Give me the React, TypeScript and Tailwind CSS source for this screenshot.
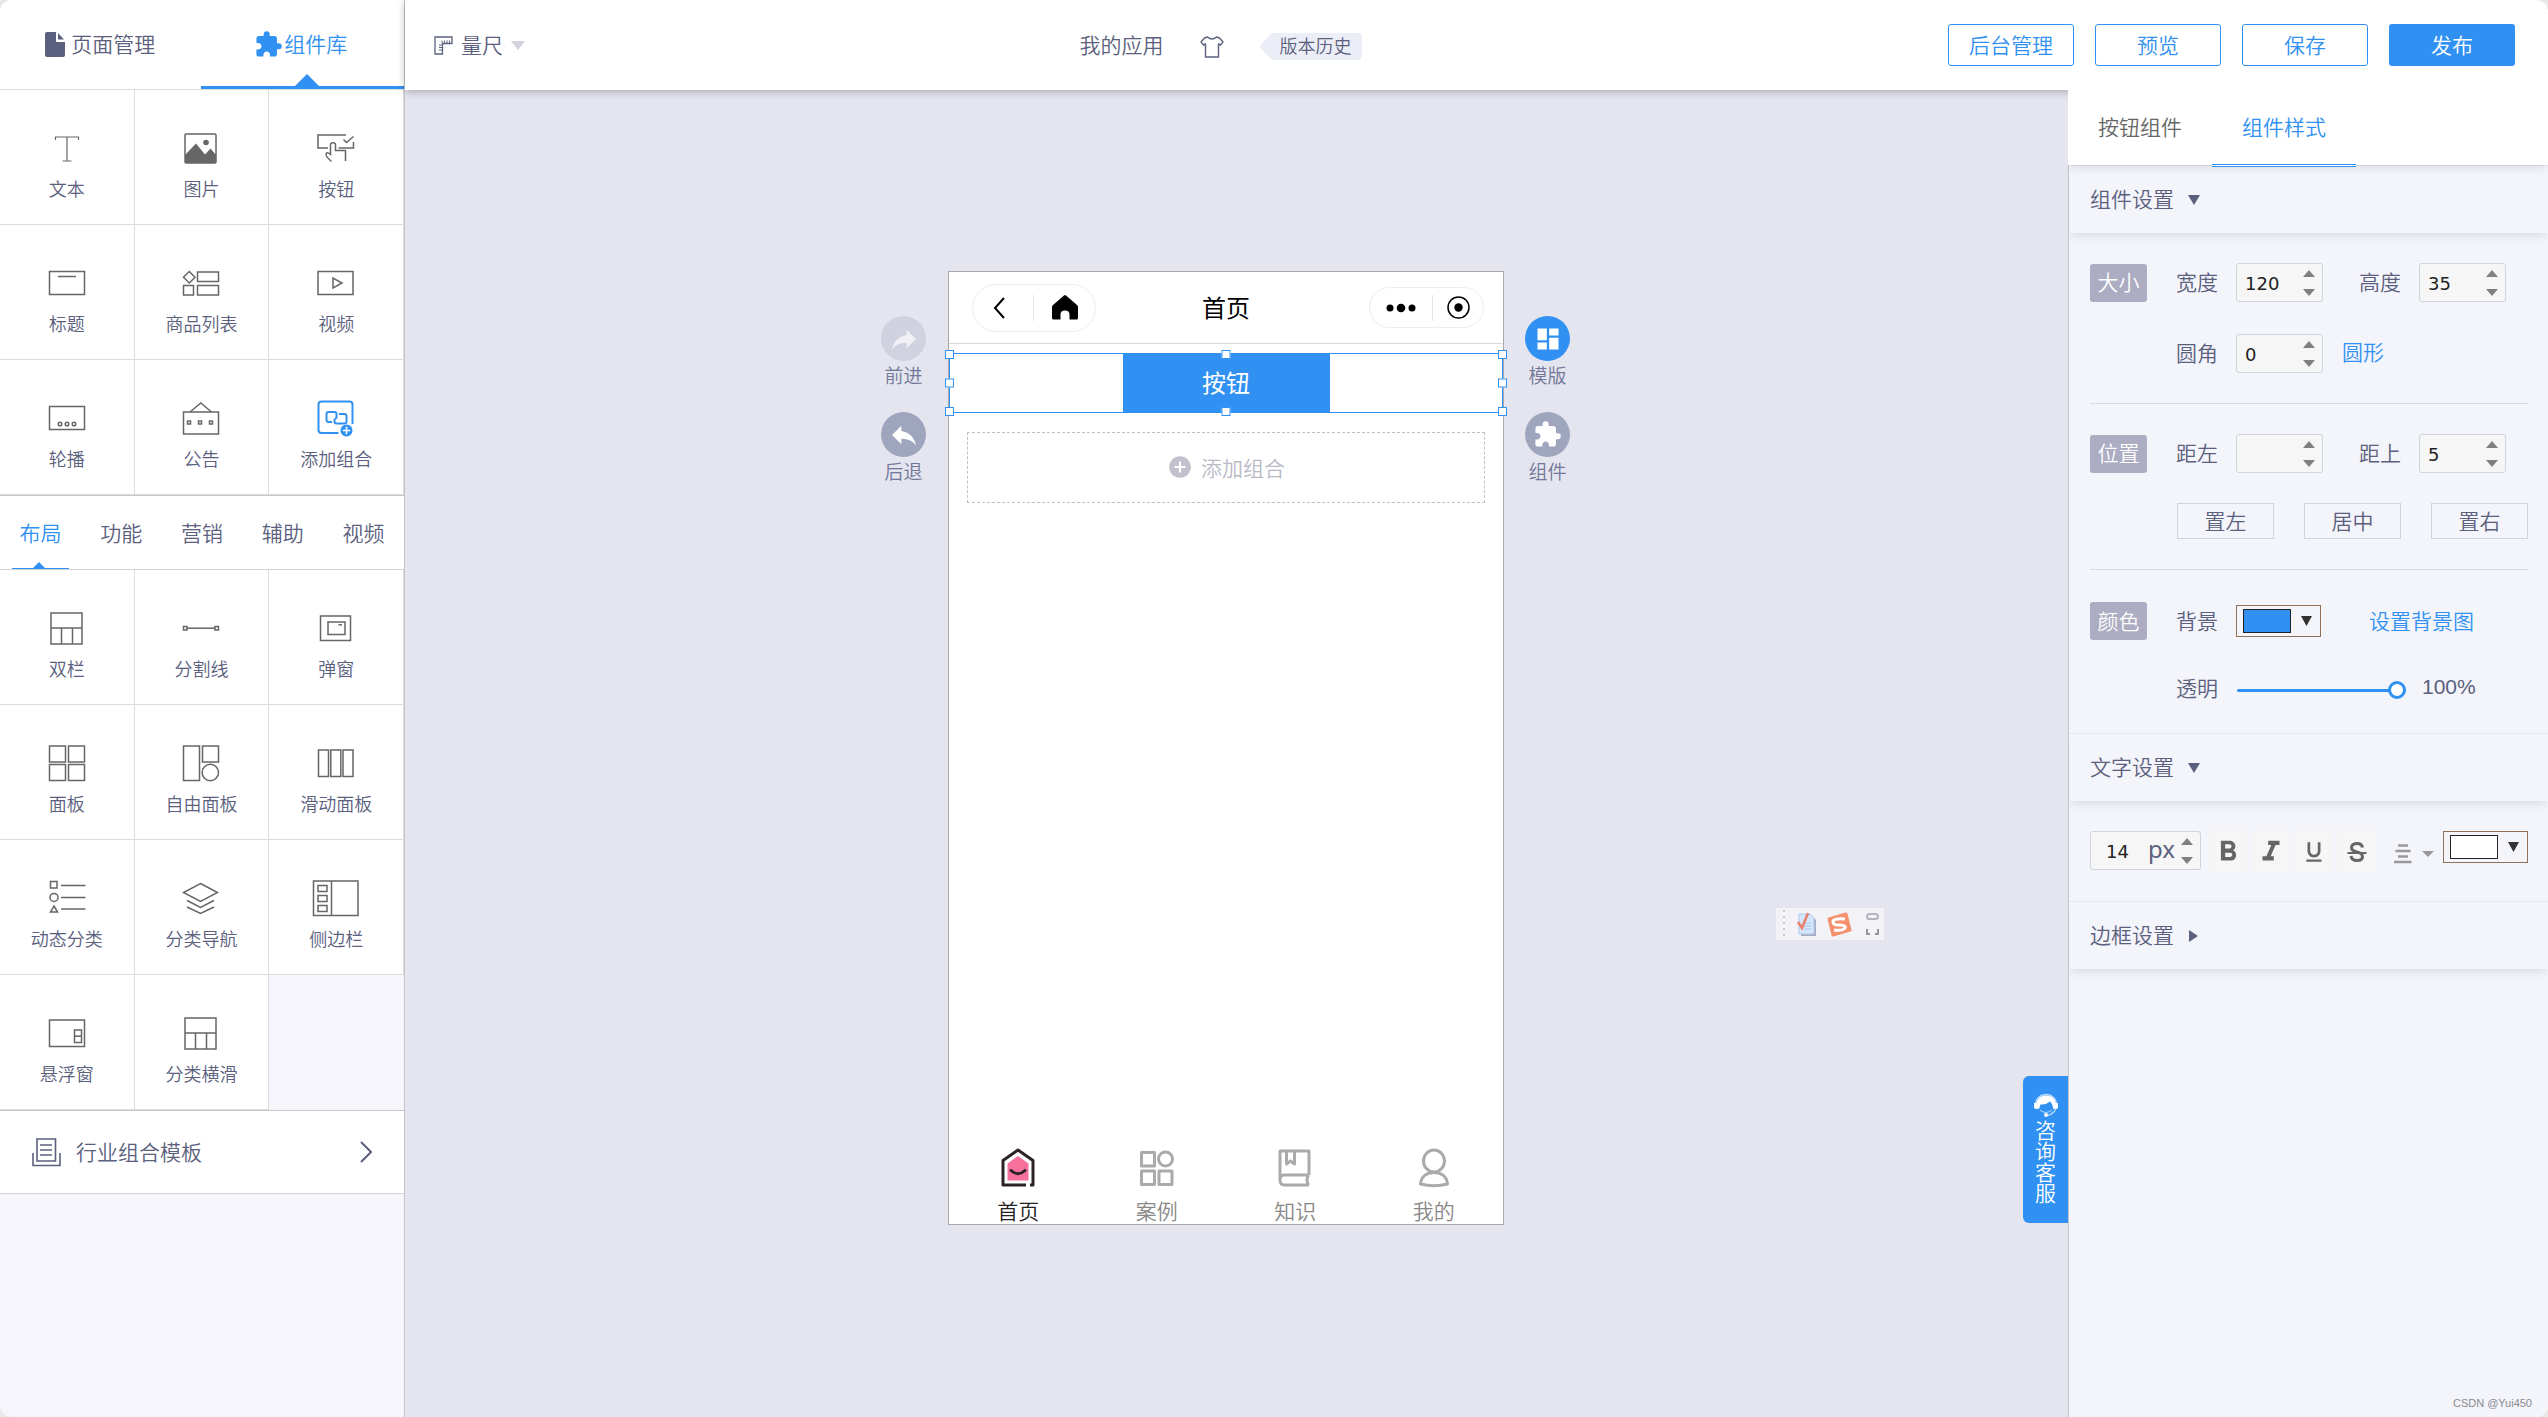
import { useState } from "react";
import type { ReactNode } from "react";
import {
  MdAddCircle,
  MdDashboard,
  MdExtension,
  MdFormatBold,
  MdFormatItalic,
  MdFormatUnderlined,
  MdReply,
} from "react-icons/md";

interface Widget {
  name: string;
  icon: ReactNode;
  accent?: boolean;
}

const columnsIcon = (
  <>
    <rect x="2" y="3" width="31" height="31" />
    <path d="M2 18H33M12.5 18V34M23.5 18V34" />
  </>
);

const basicWidgets: Widget[] = [
  {
    name: "文本",
    icon: <path d="M6.5 10V7H29.5V10M18 7V31M13.5 31H22.5" strokeWidth="1.2" />,
  },
  {
    name: "图片",
    icon: (
      <>
        <rect x="2" y="4" width="31" height="29" rx="1" />
        <path d="M2 25L13 13.5L22 24.5L27.5 18.5L33 25V33H2Z" fill="currentColor" stroke="none" />
        <circle cx="23" cy="12.5" r="2.8" fill="currentColor" stroke="none" />
      </>
    ),
  },
  {
    name: "按钮",
    icon: (
      <>
        <path d="M28 5H0V18H10M20.5 18H35.5V12M25.5 9.5L28.5 12.5L35.5 6.5" />
        <path d="M13.5 31.5C9 27.5 7.5 26 8.2 23.5C8.8 22.5 10.5 22.5 12.5 24.5V14.5C12.5 12 17.5 12 17.5 14.5V20.5H27.5V31" />
      </>
    ),
  },
  {
    name: "标题",
    icon: (
      <>
        <rect x="0.5" y="6.5" width="35" height="23" />
        <path d="M9 11.5H27" />
      </>
    ),
  },
  {
    name: "商品列表",
    icon: (
      <>
        <path d="M6.3 6.5L12 12.3L6.3 18L0.5 12.3Z" />
        <rect x="0.5" y="20.5" width="10" height="9.5" />
        <rect x="14.5" y="7" width="21" height="9.5" />
        <rect x="14.5" y="20.5" width="21" height="9.5" />
      </>
    ),
  },
  {
    name: "视频",
    icon: (
      <>
        <rect x="0" y="6.5" width="35" height="23" />
        <path d="M15 13V23L24 18Z" />
      </>
    ),
  },
  {
    name: "轮播",
    icon: (
      <>
        <rect x="0.5" y="6.5" width="35" height="23" />
        <circle cx="11" cy="24" r="1.8" />
        <circle cx="18" cy="24" r="1.8" />
        <circle cx="25" cy="24" r="1.8" />
      </>
    ),
  },
  {
    name: "公告",
    icon: (
      <>
        <rect x="0.5" y="12" width="35" height="22" />
        <path d="M7 12L17.8 3L28.5 12" />
        <rect x="4.5" y="21" width="3" height="3" />
        <rect x="15.5" y="21" width="3" height="3" />
        <rect x="26.5" y="21" width="3" height="3" />
      </>
    ),
  },
  {
    name: "添加组合",
    accent: true,
    icon: (
      <>
        <path d="M34.5 24V4.5Q34.5 1.5 31.5 1.5H3.5Q0.5 1.5 0.5 4.5V30Q0.5 33 3.5 33H20.5" strokeWidth="2" />
        <path d="M14 22H10.5Q8.5 22 8.5 20V14Q8.5 12 10.5 12H16.5Q18.5 12 18.5 14V17Q18.5 18.5 17 18.5" strokeWidth="2" />
        <path d="M21 14H26.5Q28.5 14 28.5 16V21.5Q28.5 23.5 26.5 23.5H18.5Q16.5 23.5 16.5 21.5V18.5" strokeWidth="2" />
        <circle cx="28.5" cy="30.5" r="6" fill="currentColor" stroke="none" />
        <path d="M24.8 30.5H32.2M28.5 26.8V34.2" stroke="#fff" strokeWidth="1.6" />
      </>
    ),
  },
];

const layoutWidgets: Widget[] = [
  { name: "双栏", icon: columnsIcon },
  {
    name: "分割线",
    icon: (
      <>
        <rect x="0.5" y="16.5" width="3.5" height="3.5" />
        <rect x="32" y="16.5" width="3.5" height="3.5" />
        <path d="M4 18.2H32" />
      </>
    ),
  },
  {
    name: "弹窗",
    icon: (
      <>
        <rect x="2.5" y="6" width="30" height="24.5" />
        <rect x="10" y="12" width="17" height="12.5" />
        <path d="M20.5 14.8H24" />
      </>
    ),
  },
  {
    name: "面板",
    icon: (
      <>
        <rect x="0.5" y="1" width="16" height="16" />
        <rect x="19.5" y="1" width="16" height="16" />
        <rect x="0.5" y="19.5" width="16" height="16" />
        <rect x="19.5" y="19.5" width="16" height="16" />
      </>
    ),
  },
  {
    name: "自由面板",
    icon: (
      <>
        <rect x="0.5" y="1" width="16" height="34.5" />
        <rect x="19.5" y="1" width="16" height="16" />
        <circle cx="27.3" cy="27.5" r="8.2" />
      </>
    ),
  },
  {
    name: "滑动面板",
    icon: (
      <>
        <rect x="0.5" y="5" width="10" height="26.5" />
        <rect x="12.8" y="5" width="10" height="26.5" />
        <rect x="25" y="5" width="10" height="26.5" />
      </>
    ),
  },
  {
    name: "动态分类",
    icon: (
      <>
        <rect x="1.5" y="1.5" width="6.5" height="6.5" />
        <circle cx="5" cy="17.4" r="4" />
        <path d="M5 26L8.5 32H1.5Z" />
        <path d="M12 5.5H36.5M12 17.5H36.5M12 29H36.5" />
      </>
    ),
  },
  {
    name: "分类导航",
    icon: (
      <path d="M17.5 3.5L34.5 12.5L17.5 21.5L0.5 12.5ZM4 20.5L17.5 27.3L31 20.5M4 27L17.5 33.5L31 27" />
    ),
  },
  {
    name: "侧边栏",
    icon: (
      <>
        <rect x="-4.5" y="1" width="44.5" height="34.5" />
        <path d="M13.5 1V35.5" />
        <rect x="0" y="5.5" width="9" height="6" />
        <rect x="0" y="15.5" width="9" height="6" />
        <rect x="0" y="25.5" width="9" height="6" />
      </>
    ),
  },
  {
    name: "悬浮窗",
    icon: (
      <>
        <rect x="0.5" y="5" width="35" height="26.5" />
        <rect x="25.5" y="15" width="7" height="12.5" />
        <path d="M25.5 21.2H32.5" />
      </>
    ),
  },
  { name: "分类横滑", icon: columnsIcon },
];

const categories = ["布局", "功能", "营销", "辅助", "视频"];

const WidgetGrid = ({ widgets }: { widgets: Widget[] }) => (
  <div className="grid grid-cols-3">
    {widgets.map((widget) => (
      <button
        key={widget.name}
        className="flex h-[135px] flex-col items-center gap-2 border-r border-b border-[#dcdcdc] bg-white pt-10 text-lg leading-7"
      >
        <svg
          viewBox="0 0 36 36"
          className={`h-9 w-9 overflow-visible ${widget.accent ? "text-[#3091f2]" : "text-[#666666]"}`}
          fill="none"
          stroke="currentColor"
          strokeWidth="1.5"
        >
          {widget.icon}
        </svg>
        {widget.name}
      </button>
    ))}
  </div>
);

const Sidebar = () => {
  const [category, setCategory] = useState("布局");

  return (
    <aside className="w-[405px] shrink-0 border-r border-[#c4c4cb] bg-[#f5f5fb]">
      <nav className="flex h-[90px] border-b border-[#dcdcdc] bg-white">
        <button className="flex flex-1 items-center justify-center gap-[6px]">
          <svg viewBox="0 0 20 25" className="h-[25px] w-5" fill="currentColor">
            <path d="M2 0H11V9Q11 10 12 10H20V23Q20 25 18 25H2Q0 25 0 23V2Q0 0 2 0ZM13 1L19 7.5H13Z" />
          </svg>
          <span className="pb-[3px]">页面管理</span>
        </button>
        <button className="relative flex flex-1 items-center justify-center gap-px pr-[3px] text-[#3091f2]">
          <MdExtension className="h-[29px] w-[29px]" />
          <span className="pb-[3px]">组件库</span>
          <span className="absolute inset-x-0 bottom-0 h-[3px] bg-[#3091f2]" />
          <svg viewBox="0 0 24 12" className="absolute bottom-[3px] left-[94px] h-3 w-6" fill="currentColor">
            <path d="M12 0L24 12H0Z" />
          </svg>
        </button>
      </nav>

      <WidgetGrid widgets={basicWidgets} />

      <nav className="grid h-[75px] grid-cols-5 border-t border-b border-t-[#c8c8c8] border-b-[#d4d4d4] bg-white">
        {categories.map((item) => (
          <button
            key={item}
            onClick={() => setCategory(item)}
            className={`relative pb-[2px] ${item === category ? "text-[#3091f2]" : ""}`}
          >
            {item}
            {item === category && (
              <svg viewBox="0 0 57 7" className="absolute bottom-0 left-3 h-[7px] w-[57px]" fill="currentColor">
                <path d="M0 6H21L27 0L33 6H57V7H0Z" />
              </svg>
            )}
          </button>
        ))}
      </nav>

      <WidgetGrid widgets={layoutWidgets} />

      <button className="flex h-[84px] w-full items-center border-t border-b border-t-[#c8c8c8] border-b-[#d4d4d4] bg-white pr-8 pl-8">
        <svg viewBox="0 0 29 29" className="h-[29px] w-[29px]" fill="none" stroke="currentColor" strokeWidth="1.6">
          <path d="M5 1H23.5V23H5ZM1 15V27.5H28V15M8 7H20M8 12H20M8 17H20" />
        </svg>
        <span className="ml-[15px] flex-1 pb-[2px] text-left">行业组合模板</span>
        <svg viewBox="0 0 12 22" className="h-[22px] w-3" fill="none" stroke="currentColor" strokeWidth="2">
          <path d="M1 1L11 11L1 21" />
        </svg>
      </button>
    </aside>
  );
};

const Header = () => (
  <header className="relative z-10 flex h-[90px] items-center bg-white pr-[33px] pl-[29px] shadow-[0_2px_8px_rgba(0,0,0,0.25)]">
    <button className="flex items-center">
      <svg viewBox="0 0 19 19" className="h-[19px] w-[19px]" fill="none" stroke="currentColor" strokeWidth="1.3">
        <path d="M1 1H18V7.5H8.5V18H1Z" />
        <path d="M8 4.5V7M10.5 4.5V7M13 4.5V7M15.5 4.5V7M5 9H8M5 11.5H8M5 14H8" strokeWidth="1" />
      </svg>
      <span className="ml-2 pb-[2px]">量尺</span>
      <svg viewBox="0 0 14 9" className="ml-2 h-[9px] w-[14px] text-[#d3d3de]" fill="currentColor">
        <path d="M0 0H14L7 9Z" />
      </svg>
    </button>

    <div className="flex flex-1 items-center justify-center pr-8">
      <h1 className="pb-[3px]">我的应用</h1>
      <button aria-label="主题" className="mt-1 ml-9">
        <svg viewBox="0 0 24 22" className="h-[22px] w-6" fill="none" stroke="currentColor" strokeWidth="1.4" strokeLinejoin="round">
          <path d="M7.5 1Q12 5 16.5 1L19.5 2L23 6L20.5 9L18.5 8V21H5.5V8L3.5 9L1 6L4.5 2Z" />
        </svg>
      </button>
      <button className="mt-[2px] ml-9 flex h-[27px] items-stretch text-lg leading-[25px]">
        <svg viewBox="0 0 12 27" className="w-3 text-[#eceef7]" fill="currentColor">
          <path d="M12 0L1 11.5Q-1 13.5 1 15.5L12 27Z" />
        </svg>
        <span className="rounded-r bg-[#eceef7] pr-[10px] pl-2">版本历史</span>
      </button>
    </div>

    <div className="flex gap-[21px]">
      {["后台管理", "预览", "保存"].map((label) => (
        <button key={label} className="h-[42px] w-[126px] rounded-[3px] border border-[#3091f2] pb-[3px] text-[#3091f2]">
          {label}
        </button>
      ))}
      <button className="h-[42px] w-[126px] rounded-[3px] bg-[#3091f2] pb-[3px] text-white">发布</button>
    </div>
  </header>
);

interface SideToolProps {
  label: string;
  tone: string;
  children: ReactNode;
}

const SideTool = ({ label, tone, children }: SideToolProps) => (
  <button className="flex w-[45px] flex-col items-center text-[19px] leading-7 whitespace-nowrap text-[#72779a]">
    <span className={`flex h-[45px] w-[45px] items-center justify-center rounded-full ${tone}`}>{children}</span>
    {label}
  </button>
);

// resize handles drawn on the outline of the selected widget
const handles = [
  "-top-1 -left-[5px]",
  "-top-1 left-1/2 -translate-x-1/2",
  "-top-1 -right-[5px]",
  "top-1/2 -left-[5px] -translate-y-1/2",
  "top-1/2 -right-[5px] -translate-y-1/2",
  "-bottom-1 -left-[5px]",
  "-bottom-1 left-1/2 -translate-x-1/2",
  "-bottom-1 -right-[5px]",
];

const navItems = [
  {
    label: "首页",
    active: true,
    icon: (
      <>
        <path d="M9.5 15.5L20 8L30.5 15.5V32.5H9.5Z" fill="#f5709b" stroke="none" />
        <path d="M28 37H5V12.5L20 2L35 12.5V37H32" stroke="#2c2327" />
        <path d="M13 22.5Q20 29 27 22.5" stroke="#2c2327" strokeLinecap="round" />
      </>
    ),
  },
  {
    label: "案例",
    icon: (
      <>
        <rect x="4.5" y="4.5" width="13" height="13.5" />
        <circle cx="28.5" cy="11" r="7" />
        <rect x="4.5" y="23" width="13" height="13.5" />
        <rect x="22" y="23" width="13" height="13.5" />
      </>
    ),
  },
  {
    label: "知识",
    icon: (
      <>
        <path d="M34 27V3H5V32Q5 37 9.5 37H34M34 27H9Q5 27 5 32M33.5 27Q30.5 32 33.5 37" />
        <path d="M11.5 3V16L15.5 13L19.5 16V3" />
      </>
    ),
  },
  {
    label: "我的",
    icon: (
      <>
        <ellipse cx="20" cy="13" rx="10.5" ry="11" />
        <path d="M20 24.5C11 24.5 7 30 6.5 36Q20 39.5 33.5 36C33 30 29 24.5 20 24.5Z" />
      </>
    ),
  },
];

const Phone = () => (
  <section className="flex min-h-[954px] w-[556px] flex-col border border-[#a9a9a9] bg-white text-black">
    <div className="grid h-[72px] grid-cols-[1fr_auto_1fr] items-center border-b border-[#d8d8d8] px-[19px]">
      <div className="ml-1 flex h-12 w-[124px] items-center rounded-full border border-[#eeeeee]">
        <button aria-label="返回" className="flex w-[60px] justify-center pr-2">
          <svg viewBox="0 0 12 22" className="h-[22px] w-3" fill="none" stroke="currentColor" strokeWidth="2">
            <path d="M11 1L2 11L11 21" />
          </svg>
        </button>
        <span className="h-[26px] w-px bg-[#e4e4e4]" />
        <button aria-label="主页" className="flex flex-1 justify-center">
          <svg viewBox="0 0 26 25" className="h-[25px] w-[26px]" fill="currentColor">
            <path d="M12 0.5Q13 -0.3 14 0.5L25 10Q26 11 26 12V23Q26 24.5 24.5 24.5H17.5V19.5Q17.5 15.5 13 15.5Q8.5 15.5 8.5 19.5V24.5H1.5Q0 24.5 0 23V12Q0 11 1 10Z" />
          </svg>
        </button>
      </div>
      <h2 className="pb-[2px] text-2xl font-normal">首页</h2>
      <div className="flex h-[41px] w-[115px] items-center justify-self-end rounded-full border border-[#eeeeee]">
        <button aria-label="更多" className="flex w-[62px] justify-center">
          <svg viewBox="0 0 30 10" className="h-[10px] w-[30px]" fill="currentColor">
            <circle cx="4" cy="5" r="3.5" />
            <circle cx="15" cy="5" r="4.3" />
            <circle cx="26" cy="5" r="3.5" />
          </svg>
        </button>
        <span className="h-[26px] w-px bg-[#e4e4e4]" />
        <button aria-label="关闭" className="flex flex-1 justify-center">
          <svg viewBox="0 0 23 23" className="h-[23px] w-[23px]" fill="none" stroke="currentColor" strokeWidth="1.5">
            <circle cx="11.5" cy="11.5" r="10.5" />
            <circle cx="11.5" cy="11.5" r="4.2" fill="currentColor" stroke="none" />
          </svg>
        </button>
      </div>
    </div>

    <div className="relative mt-[9px] flex h-[60px] justify-center border border-[#3091f2]">
      <button className="-my-px w-[207px] bg-[#3091f2] pb-[3px] text-2xl font-normal text-white">按钮</button>
      {handles.map((place) => (
        <span key={place} className={`absolute h-[9px] w-[9px] border border-[#3091f2] bg-white ${place}`} />
      ))}
    </div>

    <button className="mx-[18px] mt-[19px] flex h-[71px] items-center justify-center gap-2 border border-dashed border-[#c1c1ce] pb-[2px] text-[#b9bac6]">
      <MdAddCircle className="h-[26px] w-[26px] text-[#c1c1ce]" />
      添加组合
    </button>

    <nav className="mt-auto grid grid-cols-4">
      {navItems.map((item) => (
        <a
          key={item.label}
          href="#"
          className={`flex flex-col items-center gap-[10px] pb-[2px] leading-6 ${item.active ? "text-[#222222]" : "text-[#888888]"}`}
        >
          <svg viewBox="0 0 40 40" className="h-10 w-10" fill="none" stroke="#aaaaaa" strokeWidth="3" strokeLinejoin="round">
            {item.icon}
          </svg>
          {item.label}
        </a>
      ))}
    </nav>
  </section>
);

const Canvas = () => (
  <main className="relative flex flex-1 items-start justify-center bg-[#e4e5ee] pt-[181px] pr-[22px]">
    <div className="mt-[45px] mr-[22px] flex flex-col gap-[23px]">
      <SideTool label="前进" tone="bg-[#d0d2df] text-[#f0f0f5]">
        <MdReply className="h-8 w-8 -scale-x-100" />
      </SideTool>
      <SideTool label="后退" tone="bg-[#9fa5bc] text-white">
        <MdReply className="h-8 w-8" />
      </SideTool>
    </div>
    <Phone />
    <div className="mt-[45px] ml-[21px] flex flex-col gap-[23px]">
      <SideTool label="模版" tone="bg-[#3091f2] text-white">
        <MdDashboard className="h-7 w-7" />
      </SideTool>
      <SideTool label="组件" tone="bg-[#9fa5bc] text-white">
        <MdExtension className="h-[29px] w-[29px]" />
      </SideTool>
    </div>

    {/* input method bar floating over the canvas */}
    <div className="absolute top-[818px] right-[184px] flex h-8 w-[108px] items-center bg-[#f2f2f7]">
      <svg viewBox="0 0 108 32" className="h-8 w-[108px]" fill="none">
        <path d="M8 2V32" stroke="#c9c9d0" strokeWidth="2" strokeDasharray="2 4" />
        <path d="M25 8H36L40 12V28H25Z" fill="#a9adbf" />
        <path d="M23 6H34L38 10V26H23Z" fill="#d5e5fa" stroke="#a8cbf2" />
        <path d="M28 15H35M28 18H35M28 21H35" stroke="#a8cbf2" />
        <path d="M22 14L26 20L32 5" stroke="#ec7f6c" strokeWidth="2.5" />
        <path d="M53 11L70 6L74 22L57 27Z" fill="#f5906f" stroke="#f5906f" strokeWidth="3" strokeLinejoin="round" />
        <path d="M69 11Q57 10 57 14Q57 17 63 17Q70 17 69 20Q67 23 58 22" stroke="#fff" strokeWidth="3" />
        <rect x="91" y="6" width="11" height="5" rx="2.5" stroke="#b3b3bd" strokeWidth="2" />
        <path d="M91 21V26H94M102 21V26H99" stroke="#96969f" strokeWidth="2" />
      </svg>
    </div>

    <button className="absolute top-[986px] right-0 flex h-[147px] w-[45px] flex-col items-center rounded-l-md bg-[#3091f2] pt-[17px] text-white">
      <svg viewBox="0 0 24 24" className="h-6 w-6" fill="none">
        <path d="M1.5 12A10.5 10.5 0 0 1 22.5 12A10.5 10.5 0 0 1 13 22.5" stroke="#b5d8fb" strokeWidth="1.5" />
        <path d="M2.500 15C1 6 7 2.500 12 2.500C18 2.500 23 6 21.500 15L19 16C19 12.500 18 10.500 16 8.500Q12 12 6.500 11.500L5 16Z" fill="#fff" />
        <path d="M0 10H3.5V16H2Q0 16 0 14ZM24 10H20.5V16H22Q24 16 24 14Z" fill="#fff" />
        <path d="M6 17Q12 22 18 17" stroke="#b5d8fb" />
        <circle cx="12" cy="22" r="2" fill="#fff" />
      </svg>
      <span className="mt-[2px] w-[21px] leading-[21px]">咨询客服</span>
    </button>
  </main>
);

const Spinner = () => (
  <span className="flex flex-col gap-3 text-[#808080]">
    <button aria-label="增加" className="block">
      <svg viewBox="0 0 12 7" className="h-[7px] w-3" fill="currentColor">
        <path d="M6 0L12 7H0Z" />
      </svg>
    </button>
    <button aria-label="减少" className="block">
      <svg viewBox="0 0 12 7" className="h-[7px] w-3" fill="currentColor">
        <path d="M0 0H12L6 7Z" />
      </svg>
    </button>
  </span>
);

const NumberField = ({ id, label, value }: { id: string; label: string; value: string }) => (
  <div className="flex items-center">
    <label htmlFor={id} className="mr-[18px] pb-[3px]">
      {label}
    </label>
    <div className="flex h-[39px] w-[87px] items-center rounded-[3px] border border-[#ccd5db] bg-[#f6f6f6] pr-[7px] pl-2">
      <input
        id={id}
        defaultValue={value}
        inputMode="numeric"
        className="w-0 flex-1 bg-transparent pt-[3px] font-['DejaVu_Sans'] text-lg leading-6 font-normal text-[#222222] outline-none"
      />
      <Spinner />
    </div>
  </div>
);

const Badge = ({ children }: { children: ReactNode }) => (
  <h3 className="mr-[29px] flex h-[38px] w-[57px] items-center justify-center rounded-[3px] bg-[#acacc2] pb-[3px] text-white">
    {children}
  </h3>
);

const SectionTitle = ({ title, open = true }: { title: string; open?: boolean }) => (
  <button className="flex h-[68px] w-full items-center border-t border-[#e6e6ed] pl-[21px] shadow-[0_6px_8px_-2px_rgba(0,0,0,0.09)]">
    <span className="pb-[3px]">{title}</span>
    <svg viewBox="0 0 12 12" className="ml-[14px] h-3 w-3" fill="currentColor">
      {open ? <path d="M0 1H12L6 11Z" /> : <path d="M1 0L10 6L1 12Z" />}
    </svg>
  </button>
);

const ColorButton = ({ label, swatch }: { label: string; swatch: string }) => (
  <button aria-label={label} className="flex h-8 w-[85px] items-center border border-[#8f7058] pl-[6px]">
    <span className={`h-6 w-12 border border-[#222222] ${swatch}`} />
    <svg viewBox="0 0 11 10" className="ml-[10px] h-[10px] w-[11px] text-[#333333]" fill="currentColor">
      <path d="M0 0H11L5.5 10Z" />
    </svg>
  </button>
);

const StylePanel = () => {
  const [opacity, setOpacity] = useState(100);

  return (
    <aside className="relative z-20 flex w-[480px] shrink-0 flex-col overflow-x-clip">
      <nav className="relative flex h-[75px] bg-white text-[#666666] shadow-[0_6px_8px_-2px_rgba(0,0,0,0.09)]">
        <button className="w-36 pb-[3px]">按钮组件</button>
        <button className="relative w-36 pb-[3px] text-[#3091f2]">
          组件样式
          <span className="absolute inset-x-0 -bottom-[2px] h-[3px] border-y border-[#3091f2] bg-white" />
        </button>
      </nav>

      <div className="flex-1 border-l border-[#c4c4d4] bg-[#f4f4fb]">
        <SectionTitle title="组件设置" />

        <div className="mr-5 ml-[21px] border-b border-[#d9dae2] pt-[30px] pb-[30px]">
          <div className="flex items-center">
            <Badge>大小</Badge>
            <NumberField id="width" label="宽度" value="120" />
            <div className="ml-9">
              <NumberField id="height" label="高度" value="35" />
            </div>
          </div>
          <div className="mt-8 flex items-center pl-[86px]">
            <NumberField id="radius" label="圆角" value="0" />
            <a href="#" className="ml-[19px] pb-[5px] text-[#3091f2]">
              圆形
            </a>
          </div>
        </div>

        <div className="mr-5 ml-[21px] border-b border-[#d9dae2] pt-[30px] pb-[30px]">
          <div className="flex items-center">
            <Badge>位置</Badge>
            <NumberField id="left" label="距左" value="" />
            <div className="ml-9">
              <NumberField id="top" label="距上" value="5" />
            </div>
          </div>
          <div className="mt-[30px] flex justify-between pl-[87px]">
            {["置左", "居中", "置右"].map((label) => (
              <button key={label} className="h-9 w-[97px] border border-[#ccd5db] pb-[2px]">
                {label}
              </button>
            ))}
          </div>
        </div>

        <div className="mr-5 ml-[21px] pt-8 pb-[25px]">
          <div className="flex items-center">
            <Badge>颜色</Badge>
            <span className="mr-[18px] pb-[2px]">背景</span>
            <ColorButton label="背景颜色" swatch="bg-[#3091f2]" />
            <a href="#" className="ml-12 pb-[3px] text-[#3091f2]">
              设置背景图
            </a>
          </div>
          <div className="mt-7 flex h-10 items-center pl-[86px]">
            <label htmlFor="opacity" className="pb-[2px]">
              透明
            </label>
            <input
              id="opacity"
              type="range"
              value={opacity}
              onChange={(e) => setOpacity(Number(e.target.value))}
              className="mt-1 ml-[19px] h-[3px] w-[169px] appearance-none rounded bg-[#3091f2] [&::-webkit-slider-thumb]:h-[18px] [&::-webkit-slider-thumb]:w-[18px] [&::-webkit-slider-thumb]:appearance-none [&::-webkit-slider-thumb]:rounded-full [&::-webkit-slider-thumb]:border-3 [&::-webkit-slider-thumb]:border-[#3091f2] [&::-webkit-slider-thumb]:bg-white"
            />
            <output htmlFor="opacity" className="ml-4 pb-[2px] font-['Liberation_Sans'] font-normal">
              {opacity}%
            </output>
          </div>
        </div>

        <SectionTitle title="文字设置" />

        <div className="mr-5 ml-[21px] flex items-start pt-[30px] pb-[29px] text-[#666666]">
          <div className="flex h-[39px] w-[111px] items-center rounded-[3px] border border-[#ccd5db] bg-[#f6f6f6] pr-[7px] pl-[15px]">
            <input
              aria-label="字号"
              defaultValue="14"
              className="w-0 flex-1 bg-transparent pt-[3px] font-['DejaVu_Sans'] text-lg leading-6 font-normal text-[#222222] outline-none"
            />
            <span className="mr-[6px] pb-[3px] font-['Noto_Sans'] text-2xl leading-7 font-normal text-[#5a607d]">px</span>
            <Spinner />
          </div>
          <div className="ml-2 flex gap-[5px]">
            <button aria-label="加粗" className="flex h-[41px] w-[38px] items-center justify-center bg-[#f6f6f6]">
              <MdFormatBold className="h-[34px] w-[34px]" />
            </button>
            <button aria-label="斜体" className="flex h-[41px] w-[38px] items-center justify-center bg-[#f6f6f6]">
              <MdFormatItalic className="h-[34px] w-[34px]" />
            </button>
            <button aria-label="下划线" className="flex h-[41px] w-[38px] items-center justify-center bg-[#f6f6f6]">
              <MdFormatUnderlined className="h-[26px] w-[26px]" />
            </button>
            <button aria-label="删除线" className="flex h-[41px] w-[38px] items-center justify-center bg-[#f6f6f6]">
              <svg viewBox="0 0 20 22" className="h-[22px] w-5" fill="none" stroke="currentColor">
                <path
                  d="M15.500 6.500C15 3.500 12.500 2.500 10 2.500C7 2.500 4.500 4 4.500 6.500C4.500 9.500 7 10.300 10 11C13.500 11.800 15.500 12.800 15.500 15.500C15.500 18.500 13 19.500 10 19.500C7 19.500 4.500 18 4 15"
                  strokeWidth="3"
                />
                <path d="M0.500 12H19.500" strokeWidth="2" />
              </svg>
            </button>
          </div>
          <button aria-label="对齐" className="mt-3 ml-[18px] flex items-center gap-[10px] text-[#999999]">
            <svg viewBox="0 0 18 21" className="h-[21px] w-[18px]" stroke="currentColor" strokeWidth="2.5">
              <path d="M4 2.5H14M1.5 8H16.5M4 13.5H14M0 19H17.5" />
            </svg>
            <svg viewBox="0 0 12 6" className="h-[6px] w-3" fill="currentColor">
              <path d="M0 0H12L6 6Z" />
            </svg>
          </button>
          <div className="ml-auto">
            <ColorButton label="文字颜色" swatch="bg-white" />
          </div>
        </div>

        <SectionTitle title="边框设置" open={false} />
      </div>

      <p className="absolute right-4 bottom-1 font-['Liberation_Sans'] text-[11px] leading-5 font-normal text-[#8a8a90]">
        CSDN @Yui450
      </p>
    </aside>
  );
};

const App = () => {
  return (
    <div className="bg-[#e8e8e8]">
      <div className="flex min-h-screen overflow-hidden rounded-xl bg-white font-['Noto_Sans_CJK_SC',sans-serif] text-[21px] leading-8 font-[350] text-[#5a607d]">
        <Sidebar />
        <div className="flex flex-1 flex-col">
          <Header />
          <div className="flex flex-1">
            <Canvas />
            <StylePanel />
          </div>
        </div>
      </div>
    </div>
  );
};

export default App;
